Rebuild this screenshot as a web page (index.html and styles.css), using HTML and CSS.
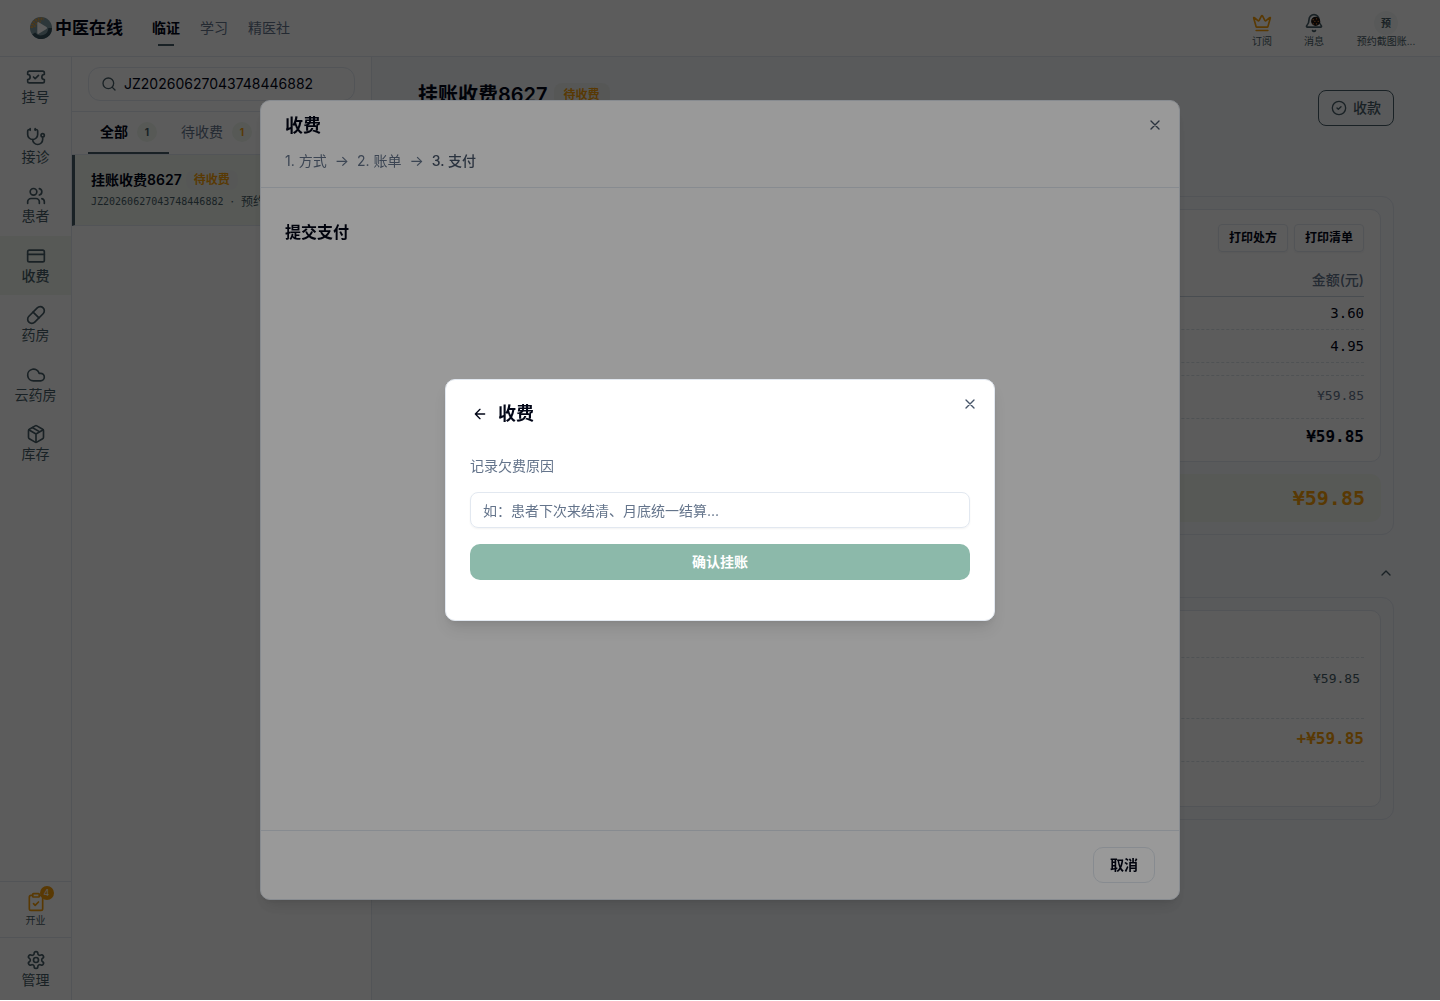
FILE: index.html
```html
<!DOCTYPE html>
<html lang="zh-CN">
<head>
<meta charset="utf-8">
<meta name="viewport" content="width=device-width, initial-scale=1">
<title>收费 - 中医在线</title>
<link rel="stylesheet" href="styles.css">
</head>
<body>
<div class="app">
  <header class="topbar">
    <a class="brand" href="#">
      <svg class="brand-mark" viewBox="0 0 24 24"><circle cx="12" cy="12" r="12" fill="#7d98a0"/><path d="M2 12A10 10 0 0 1 15 2.400" fill="none" stroke="#d9a04a" stroke-width="3" stroke-dasharray="2 1"/><path d="M5 11A7 7 0 0 1 12 5" fill="none" stroke="#d9a04a" stroke-width="2" stroke-dasharray="2 1"/><path d="M4 18A10 10 0 0 0 22 12" fill="none" stroke="#35505c" stroke-width="4"/><path d="M8 6.500Q8 5 9.500 5.700L18 10.800Q19.500 12 18 13.200L9.500 18.300Q8 19 8 17.500Z" fill="#fff"/></svg>
      <span>中医在线</span>
    </a>
    <nav class="topnav">
      <a class="is-active" href="#">临证</a>
      <a href="#">学习</a>
      <a href="#">精医社</a>
    </nav>
    <div class="top-actions">
      <button class="top-action" type="button">
        <svg class="icon accent" viewBox="0 0 24 24"><path d="M11.562 3.266a.5.5 0 0 1 .876 0L15.390 8.870a1 1 0 0 0 1.516.294L21.183 5.500a.5.5 0 0 1 .798.519l-2.834 10.246a1 1 0 0 1-.956.734H5.810a1 1 0 0 1-.957-.734L2.020 6.020a.5.5 0 0 1 .798-.519l4.276 3.664a1 1 0 0 0 1.516-.294z"/><path d="M5 21h14"/></svg>
        <span>订阅</span>
      </button>
      <button class="top-action" type="button">
        <svg class="icon" viewBox="0 0 24 24"><path d="M10.268 21a2 2 0 0 0 3.464 0"/><path d="M3.262 15.326A1 1 0 0 0 4 17h16a1 1 0 0 0 .740-1.673C19.410 13.956 18 12.499 18 8A6 6 0 0 0 6 8c0 4.499-1.411 5.956-2.738 7.326"/><circle cx="14" cy="10" r="4.500" fill="#1c1410" stroke="#1c1410"/><path d="M11 8h.1M15 7h.1M13 10h.1M17 10h.1M11 13h.1M15 13h.1" stroke="#f5893b" stroke-width="1.500"/></svg>
        <span>消息</span>
      </button>
      <button class="top-action account" type="button">
        <span class="avatar">预</span>
        <span>预约截图账...</span>
      </button>
    </div>
  </header>

  <div class="workspace">
    <aside class="rail">
      <nav class="rail-nav">
        <a href="#"><svg class="icon" viewBox="0 0 24 24"><path d="M2 9a3 3 0 1 1 0 6v2a2 2 0 0 0 2 2h16a2 2 0 0 0 2-2v-2a3 3 0 1 1 0-6V7a2 2 0 0 0-2-2H4a2 2 0 0 0-2 2Z"/><path d="m9 12 2 2 4-4"/></svg><span>挂号</span></a>
        <a href="#"><svg class="icon" viewBox="0 0 24 24"><path d="M11 2v2M5 2v2"/><path d="M5 3H4a2 2 0 0 0-2 2v4a6 6 0 0 0 12 0V5a2 2 0 0 0-2-2h-1"/><path d="M8 15a6 6 0 0 0 12 0v-3"/><circle cx="20" cy="10" r="2"/></svg><span>接诊</span></a>
        <a href="#"><svg class="icon" viewBox="0 0 24 24"><path d="M16 21v-2a4 4 0 0 0-4-4H6a4 4 0 0 0-4 4v2"/><circle cx="9" cy="7" r="4"/><path d="M22 21v-2a4 4 0 0 0-3-3.870M16 3.130a4 4 0 0 1 0 7.750"/></svg><span>患者</span></a>
        <a class="is-active" href="#"><svg class="icon" viewBox="0 0 24 24"><rect width="20" height="14" x="2" y="5" rx="2"/><path d="M2 10h20"/></svg><span>收费</span></a>
        <a href="#"><svg class="icon" viewBox="0 0 24 24"><path d="m10.500 20.500 10-10a4.950 4.950 0 1 0-7-7l-10 10a4.950 4.950 0 1 0 7 7Z"/><path d="m8.500 8.500 7 7"/></svg><span>药房</span></a>
        <a href="#"><svg class="icon" viewBox="0 0 24 24"><path d="M17.500 19H9a7 7 0 1 1 6.710-9h1.790a4.500 4.500 0 1 1 0 9Z"/></svg><span>云药房</span></a>
        <a href="#"><svg class="icon" viewBox="0 0 24 24"><path d="M11 21.730a2 2 0 0 0 2 0l7-4A2 2 0 0 0 21 16V8a2 2 0 0 0-1-1.730l-7-4a2 2 0 0 0-2 0l-7 4A2 2 0 0 0 3 8v8a2 2 0 0 0 1 1.730z"/><path d="M12 22V12M3.290 7 12 12l8.710-5M7.500 4.270l9 5.150"/></svg><span>库存</span></a>
      </nav>
      <div class="rail-foot">
        <a class="rail-task" href="#">
          <span class="task-icon"><svg class="icon accent" viewBox="0 0 24 24"><rect width="8" height="4" x="8" y="2" rx="1"/><path d="M16 4h2a2 2 0 0 1 2 2v14a2 2 0 0 1-2 2H6a2 2 0 0 1-2-2V6a2 2 0 0 1 2-2h2"/><path d="m9 14 2 2 4-4"/></svg><b class="task-count">4</b></span>
          <span>开业</span>
        </a>
        <a class="rail-admin" href="#"><svg class="icon" viewBox="0 0 24 24"><path d="M12.220 2h-.440a2 2 0 0 0-2 2v.180a2 2 0 0 1-1 1.730l-.430.250a2 2 0 0 1-2 0l-.150-.080a2 2 0 0 0-2.730.730l-.220.380a2 2 0 0 0 .730 2.730l.150.100a2 2 0 0 1 1 1.720v.510a2 2 0 0 1-1 1.740l-.150.090a2 2 0 0 0-.730 2.730l.220.380a2 2 0 0 0 2.730.730l.150-.080a2 2 0 0 1 2 0l.430.250a2 2 0 0 1 1 1.730V20a2 2 0 0 0 2 2h.440a2 2 0 0 0 2-2v-.180a2 2 0 0 1 1-1.730l.430-.250a2 2 0 0 1 2 0l.150.080a2 2 0 0 0 2.730-.730l.220-.390a2 2 0 0 0-.730-2.730l-.150-.080a2 2 0 0 1-1-1.740v-.500a2 2 0 0 1 1-1.740l.150-.090a2 2 0 0 0 .730-2.730l-.220-.380a2 2 0 0 0-2.730-.730l-.150.080a2 2 0 0 1-2 0l-.430-.250a2 2 0 0 1-1-1.730V4a2 2 0 0 0-2-2z"/><circle cx="12" cy="12" r="3"/></svg><span>管理</span></a>
      </div>
    </aside>

    <section class="list-pane">
      <div class="search-row">
        <label class="search">
          <svg class="icon" viewBox="0 0 24 24"><circle cx="11" cy="11" r="8"/><path d="m21 21-4.300-4.300"/></svg>
          <input type="text" aria-label="搜索" value="JZ20260627043748446882">
        </label>
      </div>
      <div class="tabs">
        <button class="tab is-active" type="button">全部 <span class="count">1</span></button>
        <button class="tab" type="button">待收费 <span class="count pending">1</span></button>
      </div>
      <a class="visit" href="#">
        <span class="visit-head"><strong>挂账收费8627</strong><span class="tag">待收费</span></span>
        <span class="visit-meta"><span class="mono">JZ20260627043748446882</span><span>·</span><span>预约</span></span>
      </a>
    </section>

    <main class="detail">
      <div class="detail-head">
        <h1>挂账收费8627 <span class="tag tag-lg">待收费</span></h1>
        <button class="collect" type="button"><svg class="icon" viewBox="0 0 24 24"><circle cx="12" cy="12" r="10"/><path d="m9 12 2 2 4-4"/></svg>收款</button>
      </div>
      <section class="card">
        <div class="sheet">
          <div class="sheet-tools">
            <button type="button">打印处方</button>
            <button type="button">打印清单</button>
          </div>
          <table class="bill">
            <thead><tr><th>金额(元)</th></tr></thead>
            <tbody>
              <tr><td>3.60</td></tr>
              <tr><td>4.95</td></tr>
              <tr class="spacer"><td></td></tr>
              <tr class="subtotal"><td>¥59.85</td></tr>
              <tr class="total"><td>¥59.85</td></tr>
            </tbody>
          </table>
        </div>
        <div class="due">¥59.85</div>
      </section>
      <div class="section-toggle">
        <button type="button" aria-label="收起"><svg class="icon" viewBox="0 0 24 24"><path d="m18 15-6-6-6 6"/></svg></button>
      </div>
      <section class="card">
        <div class="sheet history">
          <div class="history-title"></div>
          <div class="history-row">¥59.85</div>
          <div class="history-owed">+¥59.85</div>
          <div class="history-end"></div>
        </div>
      </section>
    </main>
  </div>
</div>

<div class="overlay">
  <section class="dialog" role="dialog" aria-labelledby="pay-title">
    <header class="dialog-head">
      <div class="dialog-title-row">
        <h2 id="pay-title">收费</h2>
        <button class="close" type="button" aria-label="关闭"><svg class="icon" viewBox="0 0 24 24"><path d="M18 6 6 18M6 6l12 12"/></svg></button>
      </div>
      <div class="steps"><span>1. 方式</span><span class="arrow">→</span><span>2. 账单</span><span class="arrow">→</span><span class="is-current">3. 支付</span></div>
    </header>
    <div class="dialog-body"><h3>提交支付</h3></div>
    <footer class="dialog-foot"><button class="cancel" type="button">取消</button></footer>
  </section>
</div>

<div class="overlay">
  <form class="popup" role="dialog" aria-labelledby="owe-title">
    <button class="close popup-close" type="button" aria-label="关闭"><svg class="icon" viewBox="0 0 24 24"><path d="M18 6 6 18M6 6l12 12"/></svg></button>
    <div class="popup-head">
      <button class="back" type="button" aria-label="返回"><svg class="icon" viewBox="0 0 24 24"><path d="m12 19-7-7 7-7M19 12H5"/></svg></button>
      <h2 id="owe-title">收费</h2>
    </div>
    <label for="reason">记录欠费原因</label>
    <input id="reason" type="text" placeholder="如：患者下次来结清、月底统一结算...">
    <button class="confirm" type="button" disabled>确认挂账</button>
  </form>
</div>
</body>
</html>
```
FILE: styles.css
```css
:root {
  --ink: #020617;
  --muted: #64748b;
  --rail: #475d66;
  --line: #e2e8f0;
  --accent: #f59e0b;
  --tint: #f0f6ee;
  --page: #f6f8fc;
}

* { box-sizing: border-box; }

body {
  margin: 0;
  font-family: Inter, "Noto Sans CJK SC", sans-serif;
  font-size: 14px;
  line-height: 20px;
  color: var(--ink);
  background: #fff;
}

h1, h2, h3 { margin: 0; }
a { color: inherit; text-decoration: none; }

button, input {
  font: inherit;
  color: inherit;
  background: none;
  border: 0;
  padding: 0;
}

.icon {
  width: 20px;
  height: 20px;
  flex: none;
  display: block;
  fill: none;
  stroke: currentColor;
  stroke-width: 2;
  stroke-linecap: round;
  stroke-linejoin: round;
}

.accent { color: var(--accent); }
.mono, .bill td, .due, .history { font-family: "DejaVu Sans Mono", monospace; }

.app {
  min-height: calc(100vh - 1px);
  display: flex;
  flex-direction: column;
}

/* Top bar */
.topbar {
  height: 57px;
  display: flex;
  align-items: center;
  padding: 0 24px 0 30px;
  border-bottom: 1px solid var(--line);
}

.brand {
  display: flex;
  align-items: center;
  gap: 3px;
  font-size: 17px;
  font-weight: 700;
}

.brand-mark { width: 22px; height: 22px; }

.topnav {
  display: flex;
  gap: 20px;
  margin-left: 29px;
  color: var(--muted);
}

.topnav a { padding: 8px 0; }

.topnav .is-active {
  color: var(--ink);
  font-weight: 700;
  background: linear-gradient(var(--rail), var(--rail)) center bottom / 16px 2px no-repeat;
}

.top-actions {
  display: flex;
  gap: 32px;
  margin-left: auto;
  padding-top: 2px;
}

.top-action {
  display: flex;
  flex-direction: column;
  align-items: center;
  justify-content: flex-end;
  gap: 2px;
  font-size: 10px;
  line-height: 12px;
  white-space: nowrap;
  color: var(--rail);
}

.account { width: 60px; gap: 0; }

.avatar {
  width: 24px;
  height: 24px;
  border-radius: 50%;
  line-height: 24px;
  font-weight: 700;
  background: #f4f7f6;
}

.workspace { flex: 1; display: flex; }

/* Module rail */
.rail {
  width: 72px;
  flex: none;
  display: flex;
  flex-direction: column;
  justify-content: space-between;
  border-right: 1px solid var(--line);
  color: var(--rail);
}

.rail a {
  display: flex;
  flex-direction: column;
  align-items: center;
}

.rail-nav {
  display: grid;
  grid-auto-rows: 1fr;
  height: 417px;
}

.rail-nav a { padding-top: 10px; }
.rail-nav .is-active { background: var(--tint); font-weight: 500; }

.rail-foot a { border-top: 1px solid var(--line); }

.rail-task {
  padding: 10px 0 9px;
  font-size: 10px;
  line-height: 16px;
}

.task-icon { position: relative; }

.task-count {
  position: absolute;
  top: -6px;
  right: -8px;
  width: 14px;
  height: 14px;
  border-radius: 50%;
  background: var(--accent);
  color: #fff;
  font-size: 9px;
  font-weight: 400;
  line-height: 14px;
  text-align: center;
}

.rail-admin { padding: 12px 0 10px; }

/* Visit list */
.list-pane {
  width: 300px;
  flex: none;
  border-right: 1px solid var(--line);
}

.search-row {
  padding: 10px 16px;
  border-bottom: 1px solid var(--line);
}

.search {
  display: flex;
  align-items: center;
  gap: 7px;
  height: 34px;
  padding: 0 12px;
  border: 1px solid var(--line);
  border-radius: 12px;
}

.search .icon { width: 16px; height: 16px; color: var(--rail); }
.search input { flex: 1; min-width: 0; }

.tabs {
  display: flex;
  padding: 0 16px;
  border-bottom: 1px solid var(--line);
}

.tab {
  display: flex;
  align-items: center;
  gap: 9px;
  height: 42px;
  padding: 0 12px;
  border-bottom: 2px solid transparent;
  color: var(--muted);
}

.tab.is-active {
  color: var(--ink);
  font-weight: 700;
  border-color: var(--rail);
}

.count {
  width: 20px;
  height: 20px;
  border-radius: 50%;
  background: var(--tint);
  color: var(--rail);
  font-size: 10px;
  font-weight: 700;
}

.count.pending { color: var(--accent); }

.visit {
  display: flex;
  flex-direction: column;
  gap: 2px;
  padding: 15px 16px 13px;
  border-left: 3px solid var(--rail);
  border-bottom: 1px solid var(--line);
  background: var(--tint);
}

.visit-head { display: flex; align-items: center; gap: 4px; }
.visit-head strong { font-weight: 600; }

.tag {
  padding: 0 8px;
  border-radius: 8px;
  color: var(--accent);
  background: #eef2ef;
  font-size: 12px;
  font-weight: 700;
  line-height: 20px;
}

.visit-meta {
  display: flex;
  gap: 7px;
  font-size: 12px;
  color: var(--rail);
}

.visit-meta .mono { font-size: 10px; }

/* Bill detail */
.detail {
  flex: 1;
  min-width: 0;
  padding: 24px 46px;
  background: var(--page);
}

.detail-head {
  display: flex;
  justify-content: space-between;
  align-items: flex-start;
  padding-bottom: 70px;
}

.detail-head h1 {
  display: flex;
  align-items: center;
  gap: 6px;
  font-size: 20px;
  line-height: 28px;
  font-weight: 600;
}

.tag-lg { padding: 2px 10px; }

.collect {
  display: flex;
  align-items: center;
  gap: 6px;
  height: 36px;
  margin-top: 9px;
  padding: 0 12px;
  border: 1px solid var(--rail);
  border-radius: 8px;
  color: var(--rail);
  font-weight: 500;
}

.collect .icon { width: 16px; height: 16px; }

.card {
  padding: 12px;
  border: 1px solid var(--line);
  border-radius: 12px;
}

.sheet {
  padding: 14px 16px;
  border: 1px solid var(--line);
  border-radius: 10px;
  background: #fff;
}

.sheet-tools {
  display: flex;
  justify-content: flex-end;
  gap: 6px;
}

.sheet-tools button {
  height: 28px;
  padding: 0 10px;
  border: 1px solid var(--line);
  border-radius: 4px;
  font-size: 12px;
  font-weight: 600;
  box-shadow: 0 1px 2px #0000000d;
}

.bill {
  width: 100%;
  margin-top: 12px;
  border-collapse: collapse;
  text-align: right;
}

.bill th {
  height: 32px;
  padding: 0;
  border-bottom: 1px solid #cbd5e1;
  color: var(--muted);
  font-weight: 500;
  text-align: right;
}

.bill td {
  height: 33px;
  padding: 0;
  border-bottom: 1px dashed #dbe2e8;
}

.bill .spacer td { height: 13px; }
.bill .subtotal td { height: 43px; padding-bottom: 2px; font-size: 13px; color: var(--muted); }
.bill .total td { height: 29px; border: 0; font-size: 16px; font-weight: 700; vertical-align: bottom; }

.due {
  margin-top: 12px;
  padding: 14px 16px;
  border-radius: 10px;
  background: var(--tint);
  color: var(--accent);
  font-size: 20px;
  font-weight: 700;
  text-align: right;
}

.section-toggle {
  display: flex;
  justify-content: flex-end;
  padding: 30px 0 16px;
  color: var(--rail);
}

.section-toggle .icon { width: 16px; height: 16px; }

.history { padding: 0 16px; text-align: right; }
.history > :not(:last-child) { border-bottom: 1px dashed #dbe2e8; }
.history-title { height: 47px; }
.history-row { height: 61px; padding: 11px 4px; font-size: 13px; color: var(--rail); }
.history-owed { height: 43px; padding: 10px 0; font-size: 16px; font-weight: 700; color: var(--accent); }
.history-end { height: 44px; }

/* Dialogs */
.overlay {
  position: fixed;
  inset: 0 0 1px;
  display: flex;
  align-items: center;
  justify-content: center;
  background: rgb(0 0 0 / 40%);
}

.dialog, .popup {
  border: 1px solid var(--line);
  border-radius: 10px;
  background: #fff;
  box-shadow: 0 10px 15px -3px #0000001a, 0 4px 6px -4px #0000001a;
}

.dialog {
  width: min(920px, 92vw);
  height: 80%;
  display: flex;
  flex-direction: column;
}

.dialog-head {
  padding: 12px 24px 16px;
  border-bottom: 1px solid var(--line);
}

.dialog-title-row {
  display: flex;
  align-items: flex-start;
  justify-content: space-between;
}

.dialog h2, .popup h2 { font-size: 18px; line-height: 26px; font-weight: 600; }

.close { width: 16px; height: 16px; color: #475569; }
.close .icon, .back .icon { width: 16px; height: 16px; }
.dialog .close { margin: 4px -8px 0 0; }

.steps {
  display: flex;
  gap: 8px;
  padding-top: 12px;
  color: var(--muted);
}

.steps .arrow { font-size: 15px; }
.steps .is-current { color: #475569; font-weight: 500; }
.dialog-body { flex: 1; padding: 32px 24px; }
.dialog-body h3 { font-size: 16px; line-height: 24px; font-weight: 600; }

.dialog-foot {
  display: flex;
  justify-content: flex-end;
  padding: 16px 24px;
  border-top: 1px solid var(--line);
}

.cancel {
  height: 36px;
  padding: 0 16px;
  border: 1px solid var(--line);
  border-radius: 10px;
  font-weight: 600;
}

.popup {
  position: relative;
  width: min(550px, 92vw);
  display: flex;
  flex-direction: column;
  padding: 21px 24px 40px;
}

.popup-close { position: absolute; top: 16px; right: 16px; }

.popup-head {
  display: flex;
  align-items: center;
  gap: 10px;
  padding-left: 2px;
}

.popup label { margin-top: 29px; color: var(--muted); }

.popup input {
  height: 36px;
  margin-top: 16px;
  padding: 0 12px;
  border: 1px solid var(--line);
  border-radius: 8px;
  box-shadow: 0 1px 2px #0000000d;
}

.popup input::placeholder { color: var(--muted); opacity: 1; }

.confirm {
  height: 36px;
  margin-top: 16px;
  border-radius: 10px;
  background: #8cb9aa;
  color: #fff;
  font-weight: 600;
}
```
